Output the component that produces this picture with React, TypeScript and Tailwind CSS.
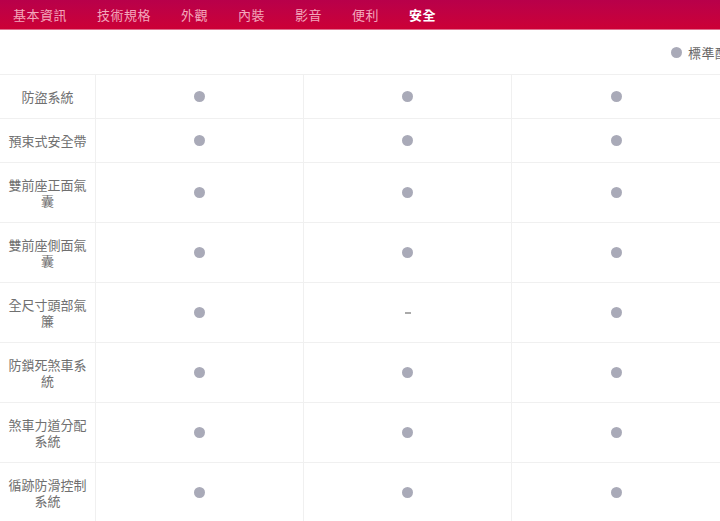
import React from 'react';

const tabs = ['基本資訊', '技術規格', '外觀', '內裝', '影音', '便利', '安全'];

type Cell = 'std' | 'none';

const rows: { label: string; cells: Cell[] }[] = [
  { label: '防盜系統', cells: ['std', 'std', 'std'] },
  { label: '預束式安全帶', cells: ['std', 'std', 'std'] },
  { label: '雙前座正面氣囊', cells: ['std', 'std', 'std'] },
  { label: '雙前座側面氣囊', cells: ['std', 'std', 'std'] },
  { label: '全尺寸頭部氣簾', cells: ['std', 'none', 'std'] },
  { label: '防鎖死煞車系統', cells: ['std', 'std', 'std'] },
  { label: '煞車力道分配系統', cells: ['std', 'std', 'std'] },
  { label: '循跡防滑控制系統', cells: ['std', 'std', 'std'] },
];

const Dot = () => <span className="block w-[11px] h-[11px] rounded-full bg-[#a9aab8]" />;

export default function App() {
  return (
    <div
      className="w-[720px] h-[521px] overflow-hidden bg-white"
      style={{ fontFamily: '"Noto Sans CJK TC", "Noto Sans", sans-serif' }}
    >
      {/* tab bar */}
      <div className="h-[30px] flex items-center pl-[13px] gap-[30px] bg-gradient-to-b from-[#b8004a] to-[#cc0036] border-b border-[#e07090]">
        {tabs.map((t, i) => (
          <span
            key={t}
            className={
              i === tabs.length - 1
                ? 'text-[13px] tracking-[0.5px] leading-none text-white font-bold'
                : 'text-[13px] tracking-[0.5px] leading-none text-[#f3a7bb]'
            }
          >
            {t}
          </span>
        ))}
      </div>

      {/* legend */}
      <div className="h-[45px] flex items-center justify-end border-b border-[#f0f0f0] whitespace-nowrap">
        <div className="flex items-center gap-[6px] -mr-[22px] pt-[1px]">
          <Dot />
          <span className="text-[13px] tracking-[0.5px] text-[#666]">標準配備</span>
        </div>
      </div>

      {/* spec table */}
      <div>
        {rows.map((r) => (
          <div key={r.label} className="flex border-b border-[#f0f0f0]">
            <div className="w-[96px] shrink-0 border-r border-[#f0f0f0] px-[8px] pt-[14px] pb-[13px] text-center text-[13px] leading-4 text-[#707070]">
              {r.label}
            </div>
            {r.cells.map((c, i) => (
              <div
                key={i}
                className={
                  i < 2
                    ? 'w-[208px] shrink-0 flex items-center justify-center border-r border-[#f0f0f0]'
                    : 'w-[208px] shrink-0 flex items-center justify-center'
                }
              >
                {c === 'std' ? <Dot /> : <span className="block w-[6px] h-[2px] bg-[#aaa]" />}
              </div>
            ))}
          </div>
        ))}
      </div>
    </div>
  );
}
